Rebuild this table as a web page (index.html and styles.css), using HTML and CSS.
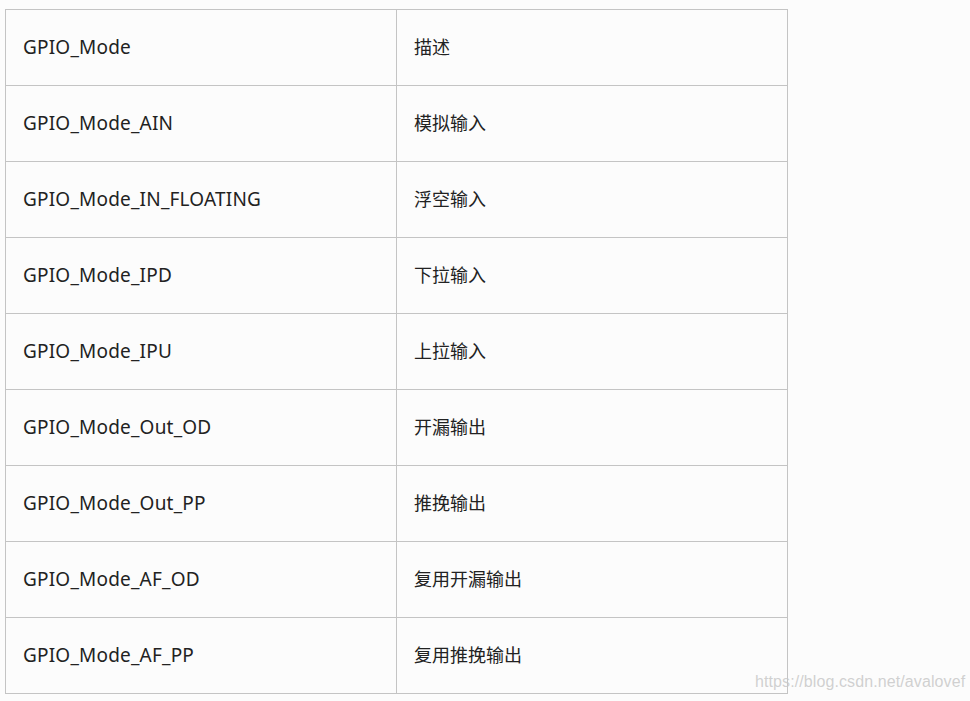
FILE: index.html
```html
<!DOCTYPE html>
<html lang="zh">
<head>
<meta charset="utf-8">
<title>GPIO Mode</title>
<link rel="stylesheet" href="styles.css">
</head>
<body>
<div class="page">
<table class="modes">
<tbody>
<tr><td class="name">GPIO_Mode</td><td class="desc">描述</td></tr>
<tr><td class="name">GPIO_Mode_AIN</td><td class="desc">模拟输入</td></tr>
<tr><td class="name">GPIO_Mode_IN_FLOATING</td><td class="desc">浮空输入</td></tr>
<tr><td class="name">GPIO_Mode_IPD</td><td class="desc">下拉输入</td></tr>
<tr><td class="name">GPIO_Mode_IPU</td><td class="desc">上拉输入</td></tr>
<tr><td class="name">GPIO_Mode_Out_OD</td><td class="desc">开漏输出</td></tr>
<tr><td class="name">GPIO_Mode_Out_PP</td><td class="desc">推挽输出</td></tr>
<tr><td class="name">GPIO_Mode_AF_OD</td><td class="desc">复用开漏输出</td></tr>
<tr><td class="name">GPIO_Mode_AF_PP</td><td class="desc">复用推挽输出</td></tr>
</tbody>
</table>
<div class="watermark">https://blog.csdn.net/avalovef</div>
</div>
</body>
</html>
```
FILE: styles.css
```css
html, body {
  margin: 0;
  padding: 0;
  background: #fcfcfc;
}
.page {
  position: relative;
  padding: 9px 0 0 5px;
  width: 970px;
  height: 701px;
  box-sizing: border-box;
}
.modes {
  border-collapse: collapse;
  font-family: "Noto Sans", "Noto Sans CJK SC", sans-serif;
  font-size: 18px;
  color: #222;
}
.modes td {
  border: 1px solid #c4c4c4;
  height: 76px;
  padding: 0 0 2px 17px;
  box-sizing: border-box;
  vertical-align: middle;
  width: 391px;
  line-height: 24px;
}
.modes td.name {
  padding-left: 17px;
  font-size: 19px;
  letter-spacing: 0.2px;
}
.watermark {
  position: absolute;
  left: 755px;
  top: 673px;
  font-family: "Liberation Sans", Arial, sans-serif;
  font-size: 16px;
  color: rgba(200, 200, 200, 0.85);
  letter-spacing: 0.1px;
}
```
